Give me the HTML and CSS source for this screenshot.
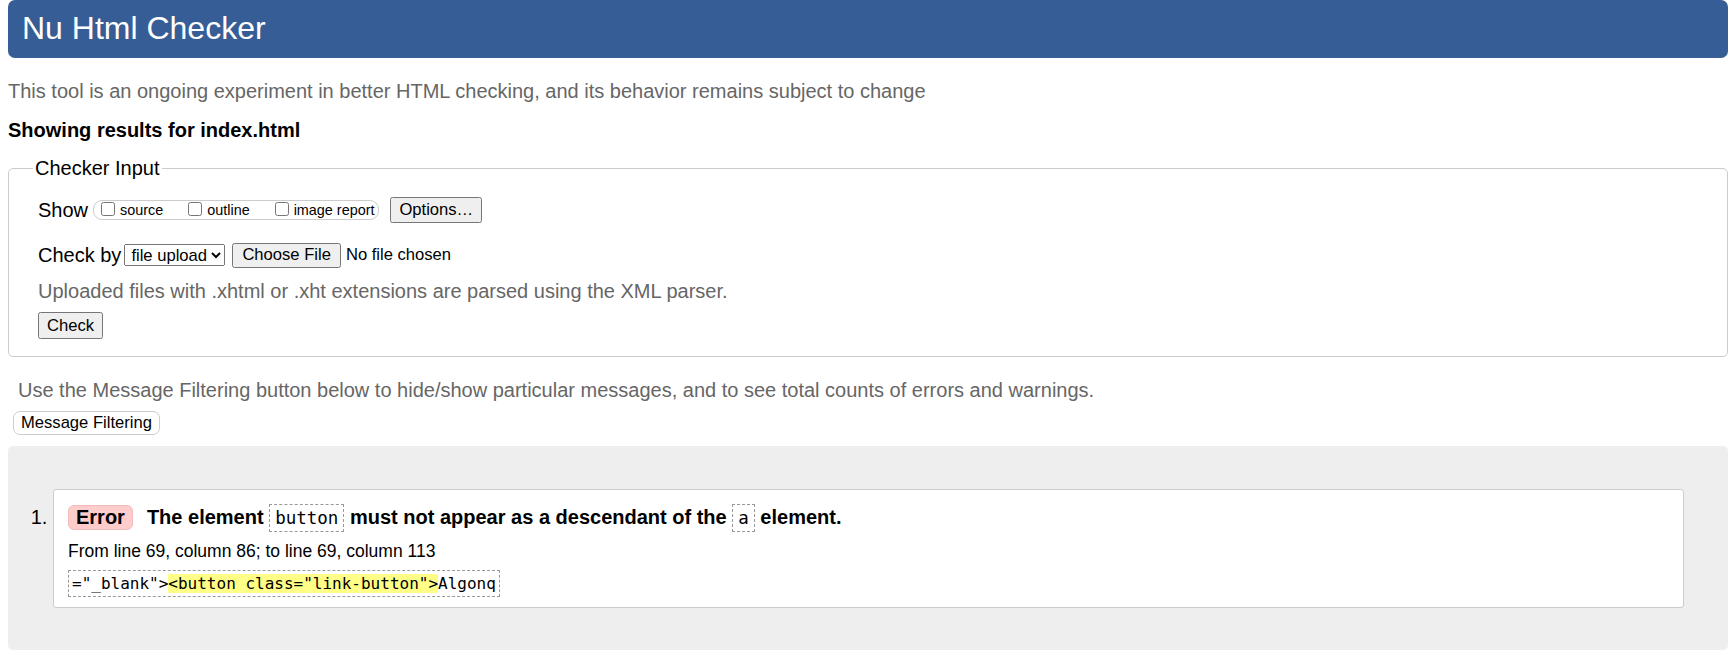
FILE: index.html
```html
<!DOCTYPE html>
<html lang="en">
<head>
<meta charset="utf-8">
<title>Showing results for index.html - Nu Html Checker</title>
<link rel="stylesheet" href="styles.css">
</head>
<body>
<h1 class="title">Nu Html Checker</h1>
<p class="intro">This tool is an ongoing experiment in better HTML checking, and its behavior remains subject to change</p>
<p class="showing">Showing results for index.html</p>
<fieldset class="input">
  <legend class="legend">Checker Input</legend>
  <div class="row">
    <span class="label">Show</span>
    <span class="pill">
      <label class="opt"><input type="checkbox" class="cb">source</label>
      <label class="opt"><input type="checkbox" class="cb">outline</label>
      <label class="opt"><input type="checkbox" class="cb">image report</label>
    </span>
    <button class="btn opts" type="button">Options…</button>
  </div>
  <div class="row row2">
    <span class="label label2">Check by</span>
    <select class="sel"><option>file upload</option></select>
    <button class="btn choose" type="button">Choose File</button>
    <span class="nofile">No file chosen</span>
  </div>
  <p class="hint">Uploaded files with .xhtml or .xht extensions are parsed using the XML parser.</p>
  <button class="btn check" type="button">Check</button>
</fieldset>
<p class="filter-hint">Use the Message Filtering button below to hide/show particular messages, and to see total counts of errors and warnings.</p>
<button class="filter-btn" type="button">Message Filtering</button>
<div class="results">
  <ol class="list">
    <li class="msg">
      <p class="msg-title"><span class="badge">Error</span><span class="msg-text">The element <code class="c">button</code> must not appear as a descendant of the <code class="c">a</code> element.</span></p>
      <p class="loc">From line 69, column 86; to line 69, column 113</p>
      <p class="extract"><code class="ex">="_blank"&gt;<b class="hl">&lt;button class="link-button"&gt;</b>Algonq</code></p>
    </li>
  </ol>
</div>
</body>
</html>
```
FILE: styles.css
```css
html, body {
  background: #fff;
}
body {
  margin: 0 8px;
  font-family: "Liberation Sans", Arial, sans-serif;
  color: #000;
  font-size: 20px;
}
.title {
  margin: 0;
  height: 58px;
  box-sizing: border-box;
  background: #365d95;
  color: #fff;
  font-weight: normal;
  font-size: 32px;
  line-height: 56px;
  padding: 0 14px;
  border-radius: 7px;
}
.intro {
  margin: 21px 0 0;
  color: #666;
  font-size: 20px;
  line-height: 24px;
}
.showing {
  margin: 15px 0 0;
  font-weight: bold;
  font-size: 20px;
  line-height: 24px;
}
.input {
  margin: 14px 0 0;
  border: 1px solid #ccc;
  border-radius: 5px;
  padding: 17px 29px 17px;
}
.legend {
  font-size: 20px;
  line-height: 24px;
  padding: 0 2px;
  margin-left: -5px;
}
.row {
  display: flex;
  align-items: center;
  height: 26px;
}
.row2 {
  margin-top: 19px;
}
.label {
  font-size: 20px;
  margin-right: 5px;
}
.label2 {
  margin-right: 3px;
}
.pill {
  display: inline-flex;
  align-items: center;
  border: 1px solid #ccc;
  border-radius: 9px;
  height: 20px;
  box-sizing: border-box;
  padding: 0 4px 0 7px;
  gap: 25px;
  margin-right: 11px;
}
.opt {
  font-size: 14.4px;
  display: inline-flex;
  align-items: center;
  line-height: 18px;
}
.cb {
  margin: 0 5px 3px 0;
  width: 14px;
  height: 14px;
}
.btn {
  font-family: "Liberation Sans", Arial, sans-serif;
  font-size: 16.6px;
  padding: 0 7px;
  height: 26px;
}
.choose {
  height: 25px;
  padding: 0 8px;
}
.sel {
  font-family: "Liberation Sans", Arial, sans-serif;
  font-size: 16.6px;
  height: 22px;
  width: 101px;
  margin-right: 7px;
  padding: 0 0 0 2px;
}
.nofile {
  font-size: 16.6px;
  margin-left: 5px;
}
.hint {
  margin: 11px 0 0;
  color: #666;
  font-size: 20px;
  line-height: 24px;
}
.check {
  margin-top: 9px;
  height: 27px;
  display: block;
  padding: 0 7px;
}
.filter-hint {
  margin: 21px 0 0 10px;
  color: #666;
  font-size: 20px;
  line-height: 24px;
}
.filter-btn {
  display: block;
  margin: 9px 0 0 5px;
  font-family: "Liberation Sans", Arial, sans-serif;
  font-size: 16.6px;
  background: #fff;
  border: 1px solid #ccc;
  border-radius: 7px;
  padding: 0 7px;
  height: 24px;
  color: #000;
}
.results {
  margin-top: 11px;
  background: #eee;
  border-radius: 5px;
  padding: 43px 44px 42px 45px;
}
.list {
  margin: 0;
  padding: 0;
}
.msg {
  background: #fff;
  border: 1px solid #ccc;
  border-radius: 3px;
  padding: 13px 14px 10px;
  font-size: 17.5px;
}
.msg::marker {
  font-size: 20px;
}
.msg-title {
  margin: 0;
  font-size: 20px;
  font-weight: bold;
  line-height: 28px;
}
.badge {
  display: inline-block;
  background: #fcc;
  border: 1px solid #f2bcbc;
  border-radius: 6px;
  padding: 0 7px;
  line-height: 23px;
  margin-right: 14px;
}
.c {
  font-family: "DejaVu Sans Mono", monospace;
  font-weight: normal;
  font-size: 17.5px;
  border: 1px dashed #999;
  padding: 3px 5px;
}
.loc {
  margin: 8px 0 0;
  font-size: 17.5px;
  line-height: 22px;
}
.extract {
  margin: 8px 0 0;
  line-height: 26px;
}
.ex {
  font-family: "DejaVu Sans Mono", monospace;
  font-size: 16px;
  border: 1px dashed #999;
  padding: 3px 3px;
}
.hl {
  font-weight: normal;
  background: #ff8;
}
```
